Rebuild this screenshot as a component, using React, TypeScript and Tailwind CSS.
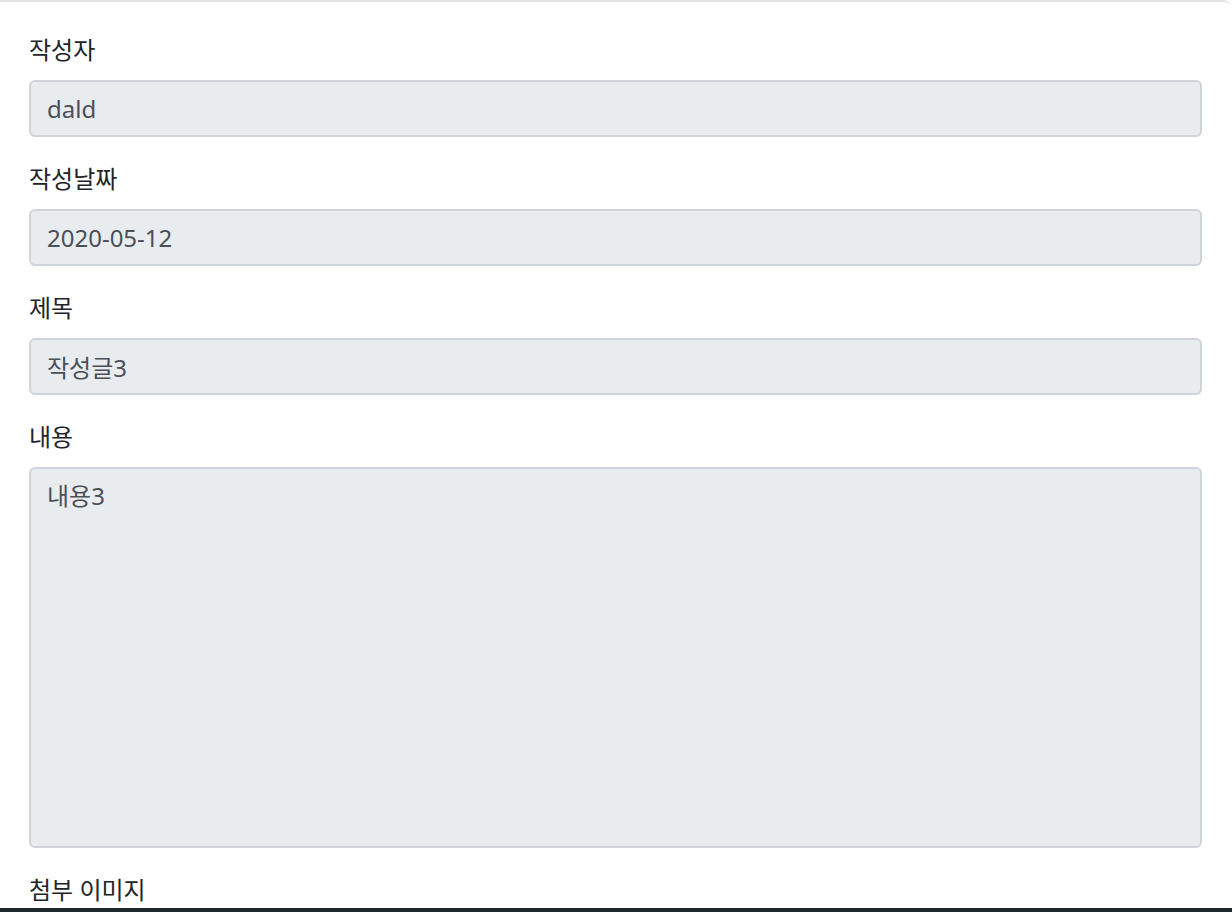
import React from 'react';

const font = { fontFamily: '"Noto Sans", "Noto Sans CJK KR", sans-serif' };

function Field({ label, value }: { label: string; value: string }) {
  return (
    <div className="mb-6">
      <label className="block mb-3 text-[24px] leading-[36px] text-[#212529]">{label}</label>
      <input
        disabled
        value={value}
        readOnly
        className="block w-full h-[57px] px-[16px] py-[9px] text-[24px] leading-[36px] text-[#495057] bg-[#e9ecef] border-2 border-[#ced4da] rounded-[6px]"
        style={font}
      />
    </div>
  );
}

export default function App() {
  return (
    <div className="w-[1232px] h-[912px] overflow-hidden bg-white flex flex-col" style={font}>
      <div className="flex-1 border-t-2 border-[#e1e3e5] rounded-tr-[6px] mr-[2px] pl-[29px] pr-[28px] pt-[30px]">
        <Field label="작성자" value="dald" />
        <Field label="작성날짜" value="2020-05-12" />
        <Field label="제목" value="작성글3" />
        <div className="mb-6">
          <label className="block mb-3 text-[24px] leading-[36px] text-[#212529]">내용</label>
          <textarea
            disabled
            readOnly
            value="내용3"
            className="block w-full h-[381px] resize-none px-[16px] py-[9px] text-[24px] leading-[36px] text-[#495057] bg-[#e9ecef] border-2 border-[#ced4da] rounded-[6px]"
            style={font}
          />
        </div>
        <label className="block text-[24px] leading-[36px] text-[#212529]">첨부 이미지</label>
      </div>
      <div className="h-[4px] bg-[#1f2b2b]" />
    </div>
  );
}
